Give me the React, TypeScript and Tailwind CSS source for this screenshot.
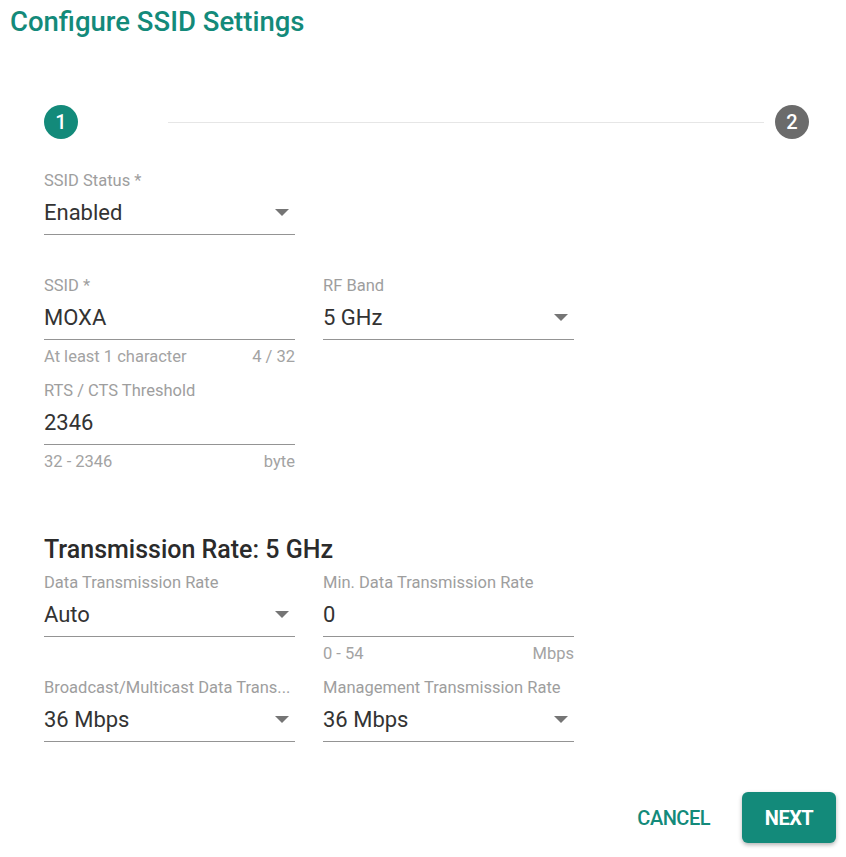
import React from 'react'

// ── Campo de formulario estilo Material ────────────────────────────────────

interface FieldProps {
  label:      string
  value:      string
  select?:    boolean
  hintLeft?:  string
  hintRight?: string
}

function Caret() {
  return (
    <svg width="14" height="7" viewBox="0 0 14 7" className="shrink-0">
      <path d="M0 0 L14 0 L7 7 Z" fill="#757575" />
    </svg>
  )
}

function Field({ label, value, select, hintLeft, hintRight }: FieldProps) {
  return (
    <div className="flex flex-col w-[251px]">
      <div className="h-[18px] leading-[18px] text-[16.5px] text-[#9e9e9e] whitespace-nowrap">
        {label}
      </div>
      <div className="mt-[9px] pb-[7px] border-b border-[#949494] flex items-center justify-between">
        <span className="h-[28px] leading-[28px] text-[22px] text-[#333333]">{value}</span>
        {select && <span className="mr-[6px] mt-[-2px]"><Caret /></span>}
      </div>
      <div className="mt-[8px] h-[18px] leading-[18px] text-[16.5px] text-[#a3a3a3] flex justify-between">
        <span>{hintLeft}</span>
        <span>{hintRight}</span>
      </div>
    </div>
  )
}

// ── Página ─────────────────────────────────────────────────────────────────

export default function App() {
  return (
    <div
      className="w-[846px] h-[857px] bg-white px-[10px] pt-[6px]"
      style={{ fontFamily: 'Roboto, "Liberation Sans", sans-serif' }}
    >
      <h1 className="h-[32px] leading-[32px] text-[27.5px] font-medium text-[#138a7a]">
        Configure SSID Settings
      </h1>

      <div className="px-[34px]">
        {/* Stepper */}
        <div className="mt-[67px] -mr-[7px] flex items-center">
          <div className="w-[34px] h-[34px] rounded-full bg-[#138a7a] text-white text-[20px] font-medium flex items-center justify-center">
            1
          </div>
          <div className="flex-1 h-px bg-[#e6e6e6] ml-[90px] mr-[11px]" />
          <div className="w-[34px] h-[34px] rounded-full bg-[#6b6b6b] text-white text-[20px] font-medium flex items-center justify-center">
            2
          </div>
        </div>

        {/* Paso 1 */}
        <div className="mt-[33px] flex flex-col gap-[16px]">
          <Field label="SSID Status *" value="Enabled" select />
          <div className="flex gap-[28px]">
            <Field label="SSID *" value="MOXA" hintLeft="At least 1 character" hintRight="4 / 32" />
            <Field label="RF Band" value="5 GHz" select />
          </div>
          <Field label="RTS / CTS Threshold" value="2346" hintLeft="32 - 2346" hintRight="byte" />
        </div>

        <h2 className="mt-[65px] h-[28px] leading-[28px] text-[25px] font-medium text-[#2b2b2b]">
          Transmission Rate: 5 GHz
        </h2>

        <div className="mt-[10px] flex flex-col gap-[16px]">
          <div className="flex gap-[28px]">
            <Field label="Data Transmission Rate" value="Auto" select />
            <Field label="Min. Data Transmission Rate" value="0" hintLeft="0 - 54" hintRight="Mbps" />
          </div>
          <div className="flex gap-[28px]">
            <Field label="Broadcast/Multicast Data Trans..." value="36 Mbps" select />
            <Field label="Management Transmission Rate" value="36 Mbps" select />
          </div>
        </div>
      </div>

      {/* Acciones */}
      <div className="mt-[24px] flex justify-end items-center gap-[32px]">
        <button type="button" className="text-[20px] font-medium text-[#138a7a] uppercase tracking-tight">
          Cancel
        </button>
        <button
          type="button"
          className="w-[94px] h-[51px] rounded-[6px] bg-[#138a7a] text-white text-[20px] font-bold uppercase tracking-tight shadow-[0_2px_4px_rgba(0,0,0,0.3)]"
        >
          Next
        </button>
      </div>
    </div>
  )
}
